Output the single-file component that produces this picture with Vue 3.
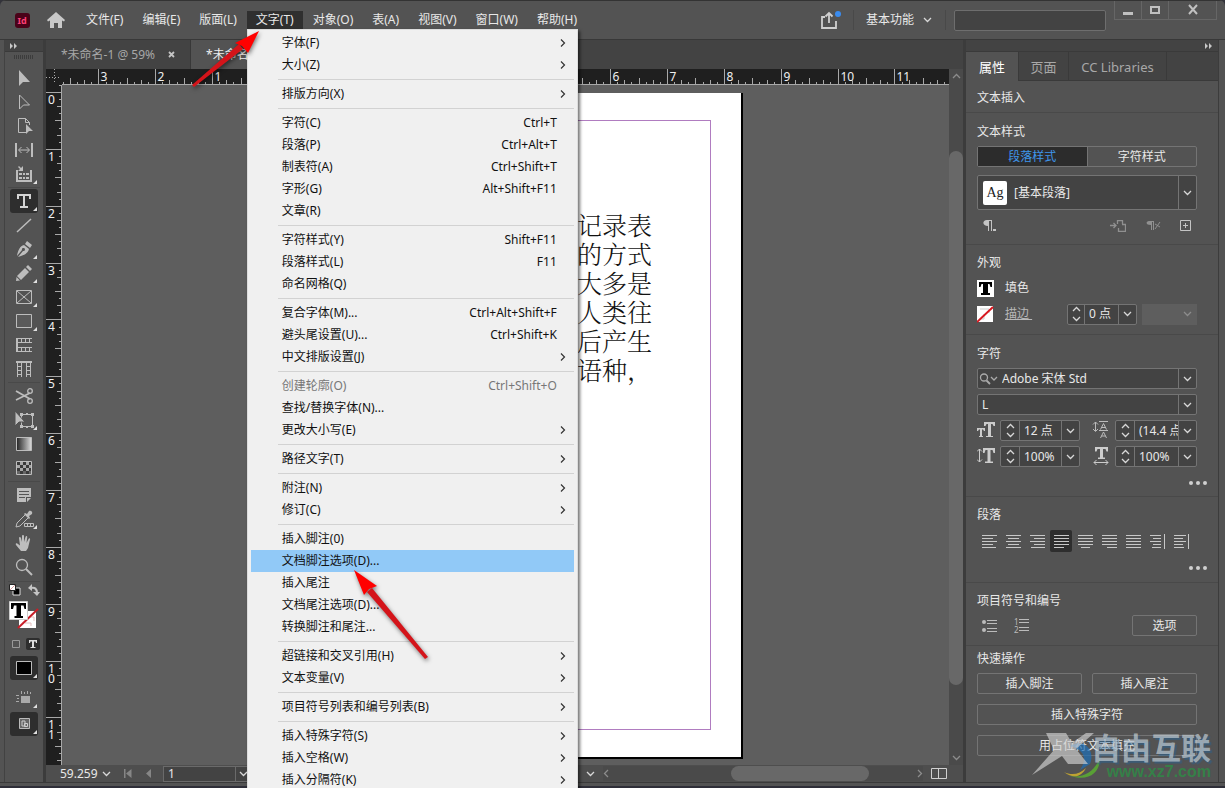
<script setup>
import { ref } from 'vue'

const menus = ['文件(F)', '编辑(E)', '版面(L)', '文字(T)', '对象(O)', '表(A)', '视图(V)', '窗口(W)', '帮助(H)']

const groups = [
  [{ t: '字体(F)', sub: 1 }, { t: '大小(Z)', sub: 1 }],
  [{ t: '排版方向(X)', sub: 1 }],
  [
    { t: '字符(C)', k: 'Ctrl+T' },
    { t: '段落(P)', k: 'Ctrl+Alt+T' },
    { t: '制表符(A)', k: 'Ctrl+Shift+T' },
    { t: '字形(G)', k: 'Alt+Shift+F11' },
    { t: '文章(R)' }
  ],
  [{ t: '字符样式(Y)', k: 'Shift+F11' }, { t: '段落样式(L)', k: 'F11' }, { t: '命名网格(Q)' }],
  [
    { t: '复合字体(M)...', k: 'Ctrl+Alt+Shift+F' },
    { t: '避头尾设置(U)...', k: 'Ctrl+Shift+K' },
    { t: '中文排版设置(J)', sub: 1 }
  ],
  [
    { t: '创建轮廓(O)', k: 'Ctrl+Shift+O', off: true },
    { t: '查找/替换字体(N)...' },
    { t: '更改大小写(E)', sub: 1 }
  ],
  [{ t: '路径文字(T)', sub: 1 }],
  [{ t: '附注(N)', sub: 1 }, { t: '修订(C)', sub: 1 }],
  [
    { t: '插入脚注(0)' },
    { t: '文档脚注选项(D)...', hot: true },
    { t: '插入尾注' },
    { t: '文档尾注选项(D)...' },
    { t: '转换脚注和尾注...' }
  ],
  [{ t: '超链接和交叉引用(H)', sub: 1 }, { t: '文本变量(V)', sub: 1 }],
  [{ t: '项目符号列表和编号列表(B)', sub: 1 }],
  [{ t: '插入特殊字符(S)', sub: 1 }, { t: '插入空格(W)', sub: 1 }, { t: '插入分隔符(K)', sub: 1 }]
]

const toolGroups = [
  [
    { n: '选择', d: '<path d="M7 4v16l4-4h7z" fill="#bdbdbd"/>' },
    { n: '直接选择', d: '<path d="M7.500 5v14l4-4h6z" fill="none" stroke="#bdbdbd"/>' },
    { n: '页面', d: '<path d="M14 18.500H6.500v-14h7l4 4V11M13.500 4.500v4h4" fill="none" stroke="#bdbdbd"/><path d="M14 10v10l3-3h4z" fill="#bdbdbd"/>' },
    { n: '间隙', d: '<path d="M4 5v14M20 5v14" stroke="#bdbdbd" stroke-width="2"/><path d="M7 12h10M9.500 9l-3 3 3 3M14.500 9l3 3-3 3" fill="none" stroke="#bdbdbd"/>' },
    { n: '内容收集器', c: 1, d: '<path d="M5 8v11h14V8" fill="none" stroke="#bdbdbd" stroke-width="2"/><path d="M7 11h3v2H7zm4 0h2v2h-2zm3 0h3v2h-3zM7 15h3v2H7zm4 0h2v2h-2zm3 0h3v2h-3zM11 4v5H6l2-2-2-2 1-1 2 2z" fill="#bdbdbd"/>' }
  ],
  [
    { n: '文字', on: true, c: 1, d: '<path d="M5 5h14v5h-2V7h-4v10h3v2H8v-2h3V7H7v3H5z" fill="#d4d4d4"/>' },
    { n: '直线', d: '<path d="M5 19L19 6" stroke="#bdbdbd" stroke-width="1.500"/>' },
    { n: '钢笔', c: 1, d: '<path d="M15 4l5 4-2 3-5-4zM12 8l5 4c-1 4-4 6-11 8l5-6a1.500 1.500 0 1 0-1-1l-5 6c1-6 3-10 7-11z" fill="#bdbdbd"/>' },
    { n: '铅笔', c: 1, d: '<path d="M16 4l4 4-2 2-4-4zM13 7l4 4-8 8-4-4zM4.500 16l3.500 3.500-4 .5z" fill="#bdbdbd"/>' },
    { n: '矩形框架', c: 1, d: '<path d="M4.500 5.500h15v13h-15zM5 6l14 12M19 6L5 18" fill="none" stroke="#bdbdbd"/>' },
    { n: '矩形', c: 1, d: '<path d="M4.500 5.500h15v13h-15z" fill="#5a5a5a" stroke="#bdbdbd"/>' },
    { n: '水平网格', d: '<path d="M5 5v14" stroke="#bdbdbd" stroke-width="2"/><path d="M4 5.500h16M4 9.500h16M4 14.500h16M4 18.500h16M9.500 5v4M13.500 5v4M17.500 5v4M9.500 15v4M13.500 15v4M17.500 15v4" fill="none" stroke="#bdbdbd"/>' },
    { n: '垂直网格', d: '<path d="M4 5h16" stroke="#bdbdbd" stroke-width="2"/><path d="M5.500 5v15M9.500 5v15M14.500 5v15M18.500 5v15M5 9.500h4M5 13.500h4M5 17.500h4M15 9.500h4M15 13.500h4M15 17.500h4" fill="none" stroke="#bdbdbd"/>' }
  ],
  [
    { n: '剪刀', d: '<path d="M4 7l14 8M4 16l14-7" stroke="#bdbdbd" stroke-width="1.800"/><circle cx="18" cy="7" r="2.300" fill="none" stroke="#bdbdbd" stroke-width="1.300"/><circle cx="18" cy="17" r="2.300" fill="none" stroke="#bdbdbd" stroke-width="1.300"/>' },
    { n: '自由变换', c: 1, d: '<path d="M9.500 6.500h11v12h-11z" fill="none" stroke="#bdbdbd"/><path d="M8 5h3v3H8zm11 0h3v3h-3zm0 12h3v3h-3zM8 17h3v3H8zm6-12h2v2h-2zm0 13h2v2h-2z" fill="#bdbdbd"/><path d="M3 3v15l4-4h6z" fill="#bdbdbd" stroke="#535353"/>' },
    { n: '渐变色板', d: '<defs><linearGradient id="gs"><stop offset="0" stop-color="#222"/><stop offset="1" stop-color="#ddd"/></linearGradient></defs><path d="M4.500 5.500h15v13h-15z" fill="url(#gs)" stroke="#bdbdbd"/>' },
    { n: '渐变羽化', d: '<path d="M4.500 5.500h15v13h-15z" fill="#3a3a3a" stroke="#bdbdbd"/><path d="M8 6h3v3H8zm6 0h3v3h-3zM5 9h3v3H5zm6 0h3v3h-3zm6 0h2v3h-2zM8 12h3v3H8zm6 0h3v3h-3z" fill="#a8a8a8"/><path d="M5 15h3v3H5zm6 0h3v3h-3zm6 0h2v3h-2z" fill="#666"/>' }
  ],
  [
    { n: '附注', d: '<path d="M5 5h14v9h-5v5H5z" fill="#bdbdbd"/><path d="M15 19v-4h4z" fill="#bdbdbd"/><path d="M7 8.500h10M7 11.500h10M7 14.500h6" stroke="#555"/>' },
    { n: '吸管', c: 1, d: '<path d="M13 8l-8 8-1 4 4-1 8-8" fill="none" stroke="#bdbdbd"/><path d="M12 7l1-1 2 1 2-3c2-1 4 1 3 3l-3 2 1 2-1 1z" fill="#bdbdbd"/><path d="M12.500 16.500h9v3h-9zM15.500 16v4M18.500 16v4" fill="none" stroke="#bdbdbd"/>' },
    { n: '抓手', d: '<path d="M9 20l-5-6c-1-2 1-2.500 2-1l2 1.500L7 7c0-1.500 1.500-1.500 2 0l1 4V5c0-1.500 2-1.500 2 0v6l1.500-5c.5-1.500 2-1 1.700.5L14.500 12l2-4c.7-1.300 2-.6 1.500.8L16 17l-2 3z" fill="#bdbdbd"/>' },
    { n: '缩放', d: '<circle cx="10" cy="10" r="5.500" fill="none" stroke="#bdbdbd" stroke-width="1.300"/><path d="M14 14l6 6" stroke="#bdbdbd" stroke-width="2"/>' }
  ]
]

const INCH = 56.86
function ticks(origin, from, to) {
  const out = []
  for (let i = from * 8; i <= to * 8; i++) {
    const major = i % 8 === 0
    out.push({
      p: Math.round(origin + (i * INCH) / 8) + 0.5,
      len: major ? 15 : i % 4 === 0 ? 6 : i % 2 === 0 ? 4 : 2,
      label: major ? String(Math.abs(i / 8)) : ''
    })
  }
  return out
}
const hTicks = ticks(207, -3.625, 11.875)
const vTicks = ticks(7, -0.125, 11.75)

const story = ['记录表', '的方式', '大多是', '人类往', '后产生', '语种，']

const metrics = [
  { n: '字体大小', v: '12 点', d: '<path d="M7 1h11v4h-1.500l-1-2H14v12h2v1H9v-1h2V3H9.500L8.500 5H7z" fill="#ccc"/><path d="M0 7h8v3H7L6 8.500H5V15h1v1H2v-1h1V8.500H2L1 10H0z" fill="#ccc"/>' },
  { n: '行距', v: '(14.4 点)', d: '<path d="M3.500 1v9M1 3.500l2.500-2.500L6 3.500M1 8l2.500 2.500L6 8M7 .5h9M7 9.500h9M8.500 8.500l3-6 3 6M9.500 6.500h4M8.500 17l3-6 3 6M9.500 15h4" fill="none" stroke="#bbb"/>' },
  { n: '垂直缩放', v: '100%', d: '<path d="M6 1h12v5h-1.500l-1-3H13.500v11.500H16V16H8v-1.500h2.500V3H8.500l-1 3H6z" fill="#ccc"/><path d="M2.500 2v13M0 4.500L2.500 2 5 4.500M0 12.500L2.500 15 5 12.500" fill="none" stroke="#ccc"/>' },
  { n: '水平缩放', v: '100%', d: '<path d="M3 0h13v4.500h-1.500l-1-2.500H11v8.500h2V12H6v-1.500h2V2H5.500l-1 2.500H3z" fill="#ccc"/><path d="M2 15.500h14M4.500 13L2 15.500 4.500 18M13.500 13l2.500 2.500-2.500 2.500" fill="none" stroke="#ccc"/>' }
]

const aligns = [
  { n: '左对齐', d: 'M1 2.500h15M1 5.500h11M1 8.500h15M1 11.500h11M1 14.500h14' },
  { n: '居中对齐', d: 'M1 2.500h15M3 5.500h11M1 8.500h15M3 11.500h11M1 14.500h15' },
  { n: '右对齐', d: 'M1 2.500h15M5 5.500h11M1 8.500h15M5 11.500h11M2 14.500h14' },
  { n: '双齐末行齐左', on: true, d: 'M1 2.500h15M1 5.500h15M1 8.500h15M1 11.500h15M1 14.500h10' },
  { n: '双齐末行居中', d: 'M1 2.500h15M1 5.500h15M1 8.500h15M1 11.500h15M4 14.500h9' },
  { n: '双齐末行齐右', d: 'M1 2.500h15M1 5.500h15M1 8.500h15M1 11.500h15M6 14.500h10' },
  { n: '全部强制双齐', d: 'M1 2.500h15M1 5.500h15M1 8.500h15M1 11.500h15M1 14.500h15' },
  { n: '朝向书脊对齐', d: 'M1 2.500h11M4 5.500h8M1 8.500h11M4 11.500h8M3 14.500h9M15.500 1v15' },
  { n: '背向书脊对齐', d: 'M1 2.500h12M1 5.500h9M1 8.500h12M1 11.500h9M1 14.500h10M15.500 1v15' }
]

const zoom = ref('59.259')
const pageNo = ref('1')
const fontName = ref('Adobe 宋体 Std')
const stroke = ref('0 点')
const search = ref('')
</script>

<template>
  <div class="window">
    <header class="titlebar">
      <svg class="logo" viewBox="0 0 15 15" role="img" aria-label="Id">
        <rect width="15" height="15" rx="3" fill="#4a0219" />
        <text x="7" y="11" text-anchor="middle" font-size="9" font-weight="bold" fill="#ff3f77">Id</text>
      </svg>
      <button class="home" aria-label="主页">
        <svg width="18" height="16" viewBox="0 0 18 16"><path d="M9 0l9 8-1 1.500-2-1V16h-4v-5H7v5H3V8.500l-2 1L0 8z" fill="#c8c8c8" /></svg>
      </button>
      <nav class="menubar">
        <div v-for="m in menus" :key="m" class="menu-slot">
          <button class="menu-btn" :class="{ open: m === '文字(T)' }">{{ m }}</button>
          <div v-if="m === '文字(T)'" class="dropdown" role="menu">
            <div v-for="(g, i) in groups" :key="i" class="menu-group">
              <button v-for="it in g" :key="it.t" class="item" :class="{ hot: it.hot }" :disabled="it.off" role="menuitem">
                <span>{{ it.t }}</span>
                <span v-if="it.k" class="keys">{{ it.k }}</span>
                <svg v-if="it.sub" class="sub" width="6" height="8" viewBox="0 0 6 8"><path d="M1 0.500L4.500 4 1 7.500" fill="none" stroke="#333" stroke-width="1.200" /></svg>
              </button>
            </div>
          </div>
        </div>
      </nav>
      <div class="spacer"></div>
      <button class="share" aria-label="共享">
        <svg width="22" height="20" viewBox="0 0 22 20">
          <path d="M5 7H2v11h14v-7M9 13V3M5.500 6.500L9 3l3.500 3.500" fill="none" stroke="#d0d0d0" stroke-width="1.800" />
          <circle cx="18" cy="4" r="3" fill="#3a8cf0" />
        </svg>
      </button>
      <label class="workspace">
        <select aria-label="工作区"><option>基本功能</option></select>
        <svg class="chev" width="9" height="6" viewBox="0 0 9 6"><path d="M1 1l3.500 3.500L8 1" /></svg>
      </label>
      <input v-model="search" class="search" type="text" aria-label="搜索" />
      <div class="winbtns">
        <button aria-label="最小化"><svg width="12" height="12"><path d="M1 8h10v3H1z" fill="#c0c0c0" /></svg></button>
        <button aria-label="最大化"><svg width="12" height="12"><path d="M2 3h8v6H2z" fill="none" stroke="#c0c0c0" stroke-width="2" /></svg></button>
        <button class="close" aria-label="关闭"><svg width="12" height="12"><path d="M2 1l8 9M10 1L2 10" stroke="#c0c0c0" stroke-width="2" /></svg></button>
      </div>
    </header>

    <div class="body">
      <aside class="tools">
        <div class="strip"><svg width="8" height="6" viewBox="0 0 8 6"><path d="M0 0l3 3-3 3zM4 0l3 3-3 3z" fill="#c8c8c8" /></svg></div>
        <div class="grip"></div>
        <div v-for="(g, i) in toolGroups" :key="i" class="tool-group">
          <button v-for="t in g" :key="t.n" class="tool" :class="{ on: t.on }" :aria-label="t.n">
            <svg width="24" height="24" viewBox="0 0 24 24" v-html="t.d"></svg>
            <i v-if="t.c" class="more"></i>
          </button>
        </div>
        <div class="swap">
          <svg width="12" height="12" viewBox="0 0 12 12"><path d="M4 4h7v7H4z" fill="#000" stroke="#ddd" /><path d="M.5.5h6v6h-6z" fill="#fff" stroke="#222" /><path d="M1 6l5-5" stroke="#d9a0a0" /></svg>
          <svg width="12" height="12" viewBox="0 0 12 12"><path d="M3 4c4-1 6 1 6 5" fill="none" stroke="#c4c4c4" stroke-width="2" /><path d="M4 0v7L0 4zM5 8h7l-3 4z" fill="#c4c4c4" /></svg>
        </div>
        <svg class="fillstroke" width="30" height="30" viewBox="0 0 30 30">
          <path d="M10 10h17v17H10z" fill="#fff" />
          <path d="M16 22h6v3M20 16h5v4" fill="none" stroke="#e3bdbd" />
          <path d="M9 27L29 8" stroke="#c81e28" stroke-width="2" />
          <path d="M.5.5h18v18H.5z" fill="#fff" stroke="#ccc" />
          <path d="M2 2h15v6h-1.500l-1-3.500H12V15h2v2H5.500v-2h2V4.500H5L4 8H2z" fill="#000" />
        </svg>
        <div class="targets">
          <button class="mini" aria-label="格式针对容器"><svg width="8" height="8"><path d="M.5.5h7v7h-7z" fill="none" stroke="#999" /></svg></button>
          <button class="mini on" aria-label="格式针对文本"><svg width="10" height="10"><path d="M1 1h8v3H8L7.500 2.500H6V8h1.500v1h-5V8H4V2.500H2.500L2 4H1z" fill="#ddd" /></svg></button>
        </div>
        <button class="tool on" aria-label="应用颜色"><svg width="24" height="24"><path d="M4.500 5.500h15v13h-15z" fill="#000" stroke="#bbb" /></svg><i class="more"></i></button>
        <button class="tool view" aria-label="视图选项"><svg width="24" height="24"><path d="M9 10h9v7H9z" fill="#aaa" /><path d="M9.500 5v3M12.500 6v2M15.500 5v3M18.500 6v2M4 9.500h3M5 12.500h2M4 15.500h3" stroke="#aaa" /></svg><i class="more"></i></button>
        <button class="tool on" aria-label="屏幕模式"><svg width="24" height="24"><path d="M7.500 6.500h10v10h-10z" fill="#666" stroke="#bbb" /><path d="M10 9h3v5h-3zM12.500 11.500h3v3h-3z" fill="none" stroke="#ccc" /></svg><i class="more"></i></button>
      </aside>

      <main class="doc">
        <div class="tabs">
          <div class="tab">*未命名-1 @ 59% <button aria-label="关闭标签"><svg width="7" height="7" viewBox="0 0 7 7"><path d="M1 1l5 5M6 1L1 6" stroke="#c4c4c4" stroke-width="1.800" /></svg></button></div>
          <div class="tab active">*未命名-2 @ 59%</div>
        </div>
        <div class="work">
          <svg class="origin"><path d="M0 8.500h15M8.500 0v15" stroke="#aaa" stroke-dasharray="1 2" /></svg>
          <svg class="hruler">
            <g v-for="t in hTicks" :key="t.p">
              <line :x1="t.p" :x2="t.p" :y1="15 - t.len" y2="15" stroke="#a8a8a8" />
              <text v-if="t.label" :x="t.p + 2" y="12">{{ t.label }}</text>
            </g>
            <line x1="0" x2="100%" y1="15.500" y2="15.500" stroke="#a8a8a8" />
          </svg>
          <svg class="vruler">
            <g v-for="t in vTicks" :key="t.p">
              <line :y1="t.p" :y2="t.p" :x1="15 - t.len" x2="15" stroke="#a8a8a8" />
              <text v-for="(c, i) in t.label" :key="i" x="2" :y="t.p + 11 + i * 10">{{ c }}</text>
            </g>
            <line y1="0" y2="100%" x1="15.500" x2="15.500" stroke="#a8a8a8" />
          </svg>
          <div class="canvas">
            <div class="page"><div class="frame"><p v-for="l in story" :key="l">{{ l }}</p></div></div>
          </div>
          <div class="vscroll">
            <svg class="chev dim" width="9" height="6" viewBox="0 0 9 6"><path d="M1 5l3.500-3.500L8 5" /></svg>
            <div class="vtrack"><div class="vthumb"></div></div>
            <svg class="chev dim" width="9" height="6" viewBox="0 0 9 6"><path d="M1 1l3.500 3.500L8 1" /></svg>
          </div>
        </div>
        <div class="status">
          <input v-model="zoom" class="zoom" aria-label="缩放级别" />
          <button class="plain" aria-label="缩放列表"><svg class="chev" width="9" height="6" viewBox="0 0 9 6"><path d="M1 1l3.500 3.500L8 1" /></svg></button>
          <button class="plain first" aria-label="第一页"><svg width="9" height="9"><path d="M1 0h1.500v9H1zM8.500 0v9L3 4.500z" fill="#868686" /></svg></button>
          <button class="plain" aria-label="上一页"><svg width="9" height="9"><path d="M7 0v9L2 4.500z" fill="#868686" /></svg></button>
          <div class="pagebox">
            <input v-model="pageNo" aria-label="页码" />
            <button class="plain" aria-label="页面列表"><svg class="chev" width="9" height="6" viewBox="0 0 9 6"><path d="M1 1l3.500 3.500L8 1" /></svg></button>
          </div>
          <div class="preflight"><svg class="chev" width="9" height="6" viewBox="0 0 9 6"><path d="M1 1l3.500 3.500L8 1" /></svg></div>
          <div class="hscroll">
            <svg class="chev dim" width="6" height="9" viewBox="0 0 6 9"><path d="M5 1L1.500 4.500 5 8" /></svg>
            <div class="htrack"><div class="hthumb"></div></div>
            <svg class="chev dim" width="6" height="9" viewBox="0 0 6 9"><path d="M1 1l3.500 3.500L1 8" /></svg>
          </div>
          <button class="plain split" aria-label="拆分窗口"><svg width="16" height="12"><path d="M.5.5h15v10H.5zM7.500 0v11" fill="none" stroke="#d0d0d0" /></svg></button>
        </div>
      </main>

      <aside class="panel">
        <div class="strip right"><svg width="8" height="6" viewBox="0 0 8 6"><path d="M0 0l3 3-3 3zM4 0l3 3-3 3z" fill="#c8c8c8" /></svg></div>
        <div class="ptabs">
          <button class="ptab active">属性</button>
          <button class="ptab">页面</button>
          <button class="ptab lib">CC Libraries</button>
        </div>

        <section class="s-insert"><h2>文本插入</h2></section>

        <section class="s-style">
          <h2>文本样式</h2>
          <div class="seg"><button class="on">段落样式</button><button>字符样式</button></div>
          <button class="stylebox">
            <span class="ag">Ag</span><span class="sname">[基本段落]</span>
            <span class="drop"><svg class="chev" width="9" height="6" viewBox="0 0 9 6"><path d="M1 1l3.500 3.500L8 1" /></svg></span>
          </button>
          <div class="styleicons">
            <button class="plain" aria-label="段落选项"><svg width="16" height="12" viewBox="0 0 16 12"><path d="M5 0h5v11H9V1H7v10H6V6C0 6 0 0 5 0zM11 9h3v2h-3z" fill="#c4c4c4" /></svg></button>
            <div class="spacer"></div>
            <button class="plain" aria-label="重定义样式"><svg width="16" height="12" viewBox="0 0 16 12"><path d="M7.500 4V.5h5V4M12 4.500h3.500v7h-7V8M0 5.500h6M3.500 3L6 5.500 3.500 8" fill="none" stroke="#909090" stroke-width="1.300" /></svg></button>
            <button class="plain" aria-label="清除优先选项"><svg width="16" height="12" viewBox="0 0 16 12"><path d="M4 1h5v9H8V2H7v8H6V5C0 5 1 1 4 1z" fill="#909090" /><path d="M10 9l5-7M10 4l5 3" stroke="#909090" /></svg></button>
            <button class="plain" aria-label="新建样式"><svg width="12" height="12" viewBox="0 0 12 12"><path d="M.5.500h10v10H.5zM3 5.500h5M5.500 3v5" fill="none" stroke="#c4c4c4" /></svg></button>
          </div>
        </section>

        <section class="s-look">
          <h2>外观</h2>
          <div class="row look">
            <svg width="17" height="17"><path d="M0 0h17v17H0z" fill="#fff" /><path d="M2 2h13v5h-1.500l-1-3H11v9h2v2H4v-2h2V4H4.500l-1 3H2z" /></svg>
            <span>填色</span>
          </div>
          <div class="row look">
            <svg width="17" height="17"><path d="M0 0h16v16H0z" fill="#fff" /><path d="M3 3h9v4M7 8v5H4" fill="none" stroke="#ccc" /><path d="M0 16L16 1" stroke="#d81820" stroke-width="2" /></svg>
            <a href="#">描边&nbsp;</a>
            <div class="spin">
              <span class="steps"><button aria-label="增加描边"><svg class="chev" width="9" height="6" viewBox="0 0 9 6"><path d="M1 5l3.500-3.500L8 5" /></svg></button><button aria-label="减少描边"><svg class="chev" width="9" height="6" viewBox="0 0 9 6"><path d="M1 1l3.500 3.500L8 1" /></svg></button></span>
              <input v-model="stroke" aria-label="描边粗细" />
              <button class="drop" aria-label="粗细列表"><svg class="chev" width="9" height="6" viewBox="0 0 9 6"><path d="M1 1l3.500 3.500L8 1" /></svg></button>
            </div>
            <button class="disabled-list" disabled aria-label="描边类型"><svg class="chev dim" width="9" height="6" viewBox="0 0 9 6"><path d="M1 1l3.500 3.500L8 1" /></svg></button>
          </div>
        </section>

        <section class="s-char">
          <h2>字符</h2>
          <div class="combo">
            <svg class="lens" width="20" height="12" viewBox="0 0 20 12"><circle cx="5" cy="4.500" r="3.500" fill="none" stroke="#aaa" stroke-width="1.300" /><path d="M7.500 7.500L11 11" stroke="#aaa" stroke-width="1.800" /><path d="M12 4l3 3 3-3" fill="none" stroke="#aaa" stroke-width="1.300" /></svg>
            <input v-model="fontName" aria-label="字体" />
            <button class="drop" aria-label="字体列表"><svg class="chev" width="9" height="6" viewBox="0 0 9 6"><path d="M1 1l3.500 3.500L8 1" /></svg></button>
          </div>
          <label class="combo">
            <select aria-label="字体样式"><option>L</option></select>
            <span class="drop"><svg class="chev" width="9" height="6" viewBox="0 0 9 6"><path d="M1 1l3.500 3.500L8 1" /></svg></span>
          </label>
          <div class="metrics">
            <div v-for="m in metrics" :key="m.n" class="metric">
              <svg width="19" height="19" v-html="m.d"></svg>
              <div class="spin">
                <span class="steps"><button :aria-label="m.n + '增加'"><svg class="chev" width="9" height="6" viewBox="0 0 9 6"><path d="M1 5l3.500-3.500L8 5" /></svg></button><button :aria-label="m.n + '减少'"><svg class="chev" width="9" height="6" viewBox="0 0 9 6"><path d="M1 1l3.500 3.500L8 1" /></svg></button></span>
                <input :value="m.v" :aria-label="m.n" />
                <button class="drop" :aria-label="m.n + '列表'"><svg class="chev" width="9" height="6" viewBox="0 0 9 6"><path d="M1 1l3.500 3.500L8 1" /></svg></button>
              </div>
            </div>
          </div>
          <button class="dots" aria-label="更多字符选项"><i></i><i></i><i></i></button>
        </section>

        <section class="s-para">
          <h2>段落</h2>
          <div class="aligns">
            <button v-for="a in aligns" :key="a.n" :class="{ on: a.on }" :aria-label="a.n"><svg width="17" height="17"><path :d="a.d" stroke="#c8c8c8" fill="none" /></svg></button>
          </div>
          <button class="dots" aria-label="更多段落选项"><i></i><i></i><i></i></button>
        </section>

        <section class="s-list">
          <h2>项目符号和编号</h2>
          <div class="row lists">
            <button class="plain" aria-label="项目符号列表"><svg width="16" height="14"><circle cx="2" cy="3" r="2" fill="#bbb" /><circle cx="2" cy="11" r="2" fill="#bbb" /><path d="M5 1.500h10M5 4.500h10M5 9.500h10M5 12.500h10" stroke="#bbb" /></svg></button>
            <button class="plain" aria-label="编号列表"><svg width="16" height="15"><text x="0" y="7" font-size="8" fill="#bbb">1</text><text x="0" y="15" font-size="8" fill="#bbb">2</text><path d="M5 1.500h10M5 4.500h10M5 9.500h10M5 12.500h10" stroke="#bbb" /></svg></button>
            <div class="spacer"></div>
            <button class="btn opt">选项</button>
          </div>
        </section>

        <section class="s-quick">
          <h2>快速操作</h2>
          <div class="quick">
            <button class="btn">插入脚注</button>
            <button class="btn">插入尾注</button>
            <button class="btn wide">插入特殊字符</button>
            <button class="btn wide">用占位符文本填充</button>
          </div>
        </section>
      </aside>
    </div>
    <footer class="edge"></footer>

    <svg class="arrows" aria-hidden="true">
      <g class="arrow"><path d="M192 85L239 44l4 5L194 87z" fill="#d4141a" /><path d="M259 31L235 43l7 3 6 7z" fill="#f00" /></g>
      <g class="arrow"><path d="M425 659L367 592l5-4 56 69z" fill="#d4141a" /><path d="M354 570l10 25 5-6 8-3z" fill="#f00" /></g>
    </svg>

    <div class="watermark" aria-hidden="true">
      <svg width="72" height="52" viewBox="0 0 72 52">
        <path d="M40 16C52 8 66 18 60 34L50 40C58 28 54 20 40 16z" fill="#1e6fb8" opacity=".7" />
        <path d="M40 46c14 2 24-4 30-18 0 14-10 24-30 18z" fill="#5aa832" opacity=".9" />
        <path d="M34 42c8 4 16 2 22-4-4 8-12 12-22 4z" fill="#d8b62a" opacity=".8" />
        <path d="M16 3h20l6 10L56 3h8L46 19l12 15H38l-6-8L2 45l22-25z" fill="#d2d2d2" opacity=".65" />
      </svg>
      <div class="wm-text"><span class="wm-name">自由互联</span><span class="wm-url">www.xz7.com</span></div>
    </div>
  </div>
</template>

<style>
html, body { margin: 0; background: #33333a; }
</style>

<style scoped>
* { box-sizing: border-box; }
.window {
  position: relative; height: 100vh; display: flex; flex-direction: column; overflow: hidden;
  background: #535353; color: #e8e8e8; border-radius: 6px 6px 0 0;
  font: 12px/16px 'Noto Sans', 'Noto Sans CJK SC', sans-serif;
}
button, input, select { font: inherit; color: inherit; background: none; border: 0; margin: 0; padding: 0; border-radius: 0; outline: 0; min-width: 0; appearance: none; }
svg { display: block; flex: none; }
.chev path { fill: none; stroke: #d8d8d8; stroke-width: 1.3; }
.chev.dim path { stroke: #8c8c8c; }
.spacer { flex: 1; }
.plain { display: flex; align-items: center; justify-content: center; }

.titlebar { flex: none; height: 39px; display: flex; align-items: center; padding: 0 8px 0 15px; border-top: 1px solid #333; }
.logo { width: 15px; height: 15px; }
.home { margin: 0 12px 0 17px; }
.menubar { display: flex; align-items: center; gap: 1px; }
.menu-slot { position: relative; }
.menu-btn { height: 18px; padding: 0 9px; line-height: 18px; display: block; white-space: nowrap; }
.menu-btn.open { background: #2f2f2f; }
.dropdown {
  position: absolute; z-index: 5; top: 100%; left: 0; width: 331px; padding: 2px 3px; color: #111;
  background: #f0f0f0; border: 1px solid #ddd; box-shadow: 2px 2px 3px rgba(0, 0, 0, .55);
}
.menu-group + .menu-group::before { content: ''; display: block; height: 1px; margin: 3px 0 3px 27px; background: #d2d2d2; }
.item { display: flex; align-items: center; width: 100%; height: 22px; padding: 0 8px 0 31px; text-align: left; }
.item span:first-child { flex: 1; }
.item.hot { background: #91c9f7; }
.item:disabled { color: #777; }
.keys { margin-right: 9px; }
.share { margin-right: 11px; }
.workspace { display: flex; align-items: center; gap: 7px; height: 20px; padding: 0 13px 0 12px; border: solid #494949; border-width: 0 1px; margin-right: 8px; }
.workspace select { width: 50px; }
.search { width: 152px; height: 21px; background: #434343; border: 1px solid #6e6e6e; border-radius: 2px; padding: 0 4px; margin-right: 8px; }
.winbtns { display: flex; align-self: flex-start; border: 1px solid #666; border-top: 0; }
.winbtns button { width: 27px; height: 18px; display: flex; align-items: center; justify-content: center; border-right: 1px solid #666; }
.winbtns button.close { width: 47px; border: 0; }

.body { flex: 1; min-height: 0; display: flex; padding: 0 6px 0 4px; border-top: 1px solid #383838; }
.tools { flex: none; width: 39px; display: flex; flex-direction: column; align-items: center; border-left: 1px solid #424242; }
.strip { align-self: stretch; flex: none; height: 12px; display: flex; align-items: center; padding: 0 5px; background: #434343; border-bottom: 1px solid #3a3a3a; }
.strip.right { justify-content: flex-end; padding: 0 5px; }
.grip { width: 20px; height: 4px; margin: 3px 0 7px; background: repeating-linear-gradient(90deg, #3c3c3c 0 1px, #535353 1px 2px); }
.tool-group { display: flex; flex-direction: column; align-items: center; }
.tool-group + .tool-group::before, .swap::before { content: ''; width: 32px; height: 1px; margin: 1px 0; background: #494949; }
.tool { position: relative; flex: none; width: 28px; height: 24px; display: flex; align-items: center; justify-content: center; border-radius: 3px; }
.tool.on { background: #2e2e2e; }
.more { position: absolute; right: 1px; bottom: 2px; border: solid transparent; border-width: 2px; border-right-color: #e0e0e0; border-bottom-color: #e0e0e0; }
.swap { display: flex; flex-wrap: wrap; justify-content: center; gap: 1px 7px; width: 34px; margin: 1px 0 5px; }
.targets { display: flex; gap: 3px; margin: 7px 0 6px; }
.mini { width: 14px; height: 12px; display: flex; align-items: center; justify-content: center; border-radius: 2px; }
.mini.on { background: #2e2e2e; }
.view { margin: 6px 0 2px; }

.doc { flex: 1; min-width: 0; display: flex; flex-direction: column; border: solid #3c3c3c; border-width: 0 3px; }
.tabs { flex: none; height: 29px; display: flex; background: #434343; }
.tab { display: flex; align-items: center; gap: 13px; padding: 0 15px; color: #a8a8a8; border-right: 1px solid #383838; white-space: nowrap; }
.tab.active { background: #535353; color: #eee; width: 170px; }
.work { flex: 1; min-height: 0; display: grid; grid-template: 16px 1fr / 16px 1fr 14px; }
.origin { width: 16px; height: 16px; background: #1f1f1f; grid-area: 1 / 1; }
.hruler { width: 100%; height: 16px; background: #1f1f1f; grid-area: 1 / 2; overflow: hidden; }
.vruler { width: 16px; height: 100%; background: #1f1f1f; grid-area: 2 / 1; overflow: hidden; }
.hruler text, .vruler text { font-size: 12px; fill: #f0f0f0; }
.canvas { grid-area: 2 / 2; min-width: 0; overflow: hidden; background: #5e5e5e; padding: 8px 0 0 208px; }
.page { width: 471px; height: 664px; padding: 27px 30px 27px 29px; background: #fff; box-shadow: 1px 1px 0 1px #000; }
.frame { height: 610px; padding: 89px 0 0 277px; border: 1px solid #b07cc0; color: #111; font: 300 25px/29px 'Noto Serif CJK SC', 'Noto Sans CJK SC', serif; white-space: nowrap; }
.frame p { margin: 0; }
.vscroll { grid-area: 1 / 3 / 3 / 4; display: flex; flex-direction: column; align-items: center; gap: 4px; padding: 4px 0; background: #4a4a4a; }
.vtrack { flex: 1; width: 14px; padding-top: 68px; }
.vthumb { height: 89%; background: #686868; border-radius: 7px; }
.status { flex: none; height: 17px; display: flex; align-items: center; background: #4e4e4e; padding-left: 14px; }
.zoom { width: 42px; }
.first { margin: 0 12px; }
.pagebox { display: flex; width: 88px; height: 16px; margin-left: 10px; border: 1px solid #6a6a6a; background: #434343; }
.pagebox input { flex: 1; padding: 0 4px; }
.pagebox button { width: 15px; border-left: 1px solid #6a6a6a; }
.preflight { width: 344px; display: flex; justify-content: flex-end; }
.hscroll { flex: 1; display: flex; align-items: center; gap: 4px; margin: 0 8px; background: #4a4a4a; }
.htrack { flex: 1; padding-left: 37%; }
.hthumb { width: 76%; height: 15px; border-radius: 8px; background: #686868; }
.split { margin-right: 16px; }

.panel { flex: none; width: 253px; border-right: 1px solid #3c3c3c; }
.ptabs { display: flex; height: 29px; background: #434343; border-bottom: 1px solid #3a3a3a; font-size: 13px; }
.ptab { width: 53px; height: 29px; color: #a8a8a8; border-right: 1px solid #3a3a3a; }
.ptab + .ptab { width: 50px; }
.ptab.active { background: #535353; color: #fff; }
.ptab.lib { width: 98px; }
section { padding: 0 21px 0 11px; border-bottom: 1px solid #494949; }
h2 { margin: 0; font: inherit; line-height: 18px; padding-top: 9px; }
.s-insert { height: 32px; }
.s-insert h2 { padding-top: 8px; }
.s-style { height: 132px; }
.s-style h2, .s-char h2 { padding-top: 10px; }
.seg { display: flex; height: 21px; margin: 5px 0 8px; border: 1px solid #747474; border-radius: 2px; }
.seg button { flex: 1; }
.seg .on { background: #2c2c2c; color: #3f95ea; border-right: 1px solid #747474; }
.stylebox { display: flex; align-items: center; width: 100%; height: 35px; padding-left: 5px; background: #434343; border: 1px solid #747474; border-radius: 2px; text-align: left; }
.ag { width: 24px; height: 24px; background: #fff; color: #222; border-radius: 2px; text-align: center; font: 14px/24px 'Liberation Serif', serif; }
.sname { flex: 1; padding-left: 7px; }
.drop { width: 18px; align-self: stretch; flex: none; display: flex; align-items: center; justify-content: center; border-left: 1px solid #747474; }
.styleicons { display: flex; align-items: center; gap: 19px; padding: 10px 5px 0; }
.s-look { height: 90px; }
.s-look h2 { padding-bottom: 3px; }
.row { display: flex; align-items: center; }
.look { height: 26px; }
.look > span, .look > a { width: 62px; margin-left: 11px; }
.look > a { color: #b8b8b8; }
.spin { display: flex; width: 70px; height: 21px; border: 1px solid #747474; border-radius: 2px; background: #434343; }
.steps { width: 17px; flex: none; display: flex; flex-direction: column; border-right: 1px solid #747474; }
.steps button { flex: 1; display: flex; align-items: center; justify-content: center; }
.spin input { flex: 1; width: 20px; padding: 0 0 0 4px; }
.disabled-list { width: 55px; height: 21px; margin-left: 5px; padding-right: 5px; display: flex; align-items: center; justify-content: flex-end; background: #5e5e5e; }
.s-char { height: 162px; }
.combo { display: flex; align-items: center; height: 21px; margin-top: 5px; background: #434343; border: 1px solid #747474; border-radius: 2px; }
.combo input, .combo select { flex: 1; padding-left: 3px; }
.combo select { padding-left: 4px; }
.lens { margin-left: 1px; }
.metrics { display: grid; grid-template-columns: 103px 1fr; gap: 5px 12px; margin-top: 5px; }
.metric { display: flex; align-items: center; justify-content: space-between; }
.metric .spin { width: 80px; }
.metric:nth-child(even) .spin { width: 82px; }
.metric .steps { width: 19px; }
.dots { display: flex; gap: 3px; margin: 14px -10px 0 auto; }
.dots i { width: 4px; height: 4px; border-radius: 2px; background: #d0d0d0; }
.s-para { height: 86px; }
.aligns { display: flex; gap: 2px; margin-top: 6px; padding-left: 1px; }
.aligns button { width: 22px; height: 22px; display: flex; align-items: center; justify-content: center; border-radius: 2px; }
.aligns .on { background: #2e2e2e; }
.s-list { height: 63px; }
.lists { margin-top: 5px; gap: 16px; padding-left: 5px; }
.btn { height: 21px; border: 1px solid #747474; border-radius: 2px; }
.opt { width: 65px; }
.s-quick { border: 0; }
.s-quick h2 { padding-top: 4px; }
.quick { display: grid; grid-template-columns: 1fr 1fr; gap: 10px; margin-top: 5px; }
.wide { grid-column: span 2; }
.edge { flex: none; height: 6px; border-top: 1px solid #3a3a3a; border-bottom: 2px solid #2e2e38; }

.arrows { position: absolute; inset: 0; width: 100%; height: 100%; pointer-events: none; z-index: 8; }
.arrow { filter: drop-shadow(1px 2px 2px rgba(0, 0, 0, .5)); }
.watermark { position: absolute; right: 14px; bottom: 6px; z-index: 9; display: flex; pointer-events: none; }
.watermark svg { margin-right: -11px; }
.wm-text { display: flex; flex-direction: column; align-items: flex-end; }
.wm-name { font: bold 30px/32px 'Noto Sans CJK SC', sans-serif; color: rgba(205, 215, 222, .65); text-shadow: 2px 2px 1px rgba(40, 100, 150, .5); }
.wm-url { font: bold 16px/20px 'Liberation Sans', sans-serif; color: #358048; }
</style>
